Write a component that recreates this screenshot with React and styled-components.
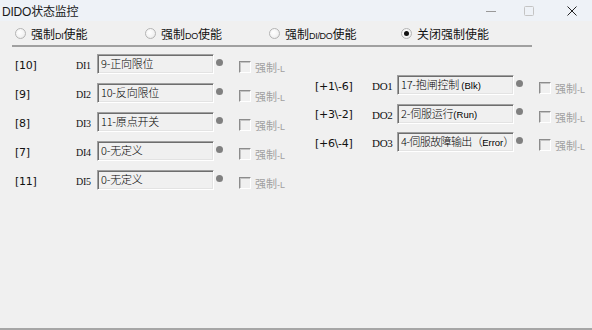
import React from "react";
import styled, { createGlobalStyle } from "styled-components";

const GlobalStyle = createGlobalStyle`
  html, body {
    margin: 0;
    padding: 0;
    background: #f0f0f0;
  }
  body {
    font-family: "Liberation Sans", "Noto Sans CJK SC", sans-serif;
    font-size: 12px;
    color: #000;
  }
`;

const Window = styled.div`
  width: 592px;
  height: 330px;
  box-sizing: border-box;
  display: flex;
  flex-direction: column;
  background: #f0f0f0;
  border-bottom: 2px solid #a6a6a6;
  overflow: hidden;
`;

const TitleBar = styled.div`
  height: 21px;
  flex: none;
  display: flex;
  align-items: center;
  background: #eef2f7;
  padding-left: 2px;
`;

const Title = styled.div`
  flex: 1;
  font-size: 12px;
  color: #1a1a1a;
  letter-spacing: -0.2px;
`;

const Controls = styled.div`
  display: flex;
  align-items: center;
  height: 100%;
`;

const Ctrl = styled.div`
  width: ${(p) => p.$w}px;
  height: 21px;
  display: flex;
  align-items: center;
  justify-content: center;
`;

const RadioRow = styled.div`
  display: flex;
  align-items: center;
  height: 24px;
  padding-left: 15px;
  flex: none;
`;

const RadioItem = styled.label`
  display: flex;
  align-items: center;
  width: ${(p) => (p.$w ? p.$w + "px" : "auto")};
  gap: 5px;
  font-size: 12px;
  font-family: "Noto Sans CJK SC", sans-serif;
  color: #111;
`;

const RadioDot = styled.span`
  width: 11px;
  height: 11px;
  box-sizing: border-box;
  border-radius: 50%;
  border: 1px solid #b4b4b4;
  background: radial-gradient(circle at 40% 40%, #ffffff 0%, #f2f2f2 60%, #dcdcdc 100%);
  display: flex;
  align-items: center;
  justify-content: center;
  &::after {
    content: "";
    width: 5px;
    height: 5px;
    border-radius: 50%;
    background: ${(p) => (p.$on ? "#111" : "transparent")};
  }
`;

const Small = styled.span`
  font-family: "Liberation Sans", sans-serif;
  font-size: 9px;
  letter-spacing: -0.3px;
`;

const Separator = styled.div`
  margin-left: 12px;
  width: 520px;
  height: 0;
  border-top: 2px solid #a0a0a0;
  flex: none;
`;

const Panels = styled.div`
  display: flex;
  padding-left: 15px;
`;

const Column = styled.div`
  width: ${(p) => p.$w}px;
  display: flex;
  flex-direction: column;
  gap: ${(p) => p.$gap}px;
  padding-top: ${(p) => p.$top}px;
`;

const Row = styled.div`
  display: flex;
  align-items: center;
  height: 20px;
`;

const Tag = styled.span`
  width: ${(p) => p.$w}px;
  flex: none;
  font-size: 11px;
  font-family: "DejaVu Sans", "Liberation Sans", sans-serif;
  letter-spacing: -0.3px;
  color: #111;
  padding-top: 2px;
`;

const Name = styled.span`
  width: ${(p) => p.$w}px;
  flex: none;
  font-size: ${(p) => p.$fs || 10}px;
  font-family: "Liberation Serif", "DejaVu Serif", serif;
  letter-spacing: -0.3px;
  color: #111;
  padding-top: 2px;
`;

const Field = styled.div`
  width: ${(p) => p.$w}px;
  height: 20px;
  box-sizing: border-box;
  flex: none;
  border-top: 1px solid #a0a0a0;
  border-left: 1px solid #a0a0a0;
  border-right: 1px solid #ffffff;
  border-bottom: 1px solid #ffffff;
  box-shadow: inset 1px 1px 0 #6e6e6e, inset -1px -1px 0 #e3e3e3;
  background: #f0f0f0;
  padding: 1px 0 0 3px;
  font-family: "Noto Sans CJK SC", sans-serif;
  font-size: 11px;
  font-weight: 300;
  line-height: 14px;
  letter-spacing: ${(p) => (p.$tight ? "-0.6px" : "-0.2px")};
  white-space: nowrap;
  color: #000;
`;

const Latin = styled.span`
  font-family: "Liberation Sans", sans-serif;
  font-size: 9.5px;
  letter-spacing: 0;
`;

const Lamp = styled.span`
  width: 7px;
  height: 7px;
  border-radius: 50%;
  background: #808080;
  flex: none;
  margin: 0 0 4px 2px;
`;

const Force = styled.label`
  display: flex;
  align-items: center;
  gap: 4px;
  margin-left: 16px;
  padding-top: 6px;
  color: #a0a0a0;
  font-family: "Noto Sans CJK SC", sans-serif;
  font-size: 11px;
`;

const Box = styled.span`
  width: 12px;
  height: 12px;
  box-sizing: border-box;
  border-top: 1px solid #8c8c8c;
  border-left: 1px solid #8c8c8c;
  border-right: 1px solid #fff;
  border-bottom: 1px solid #fff;
  box-shadow: inset 1px 1px 0 #c4c4c4;
  background: #f0f0f0;
`;

const SmallL = styled.span`
  font-size: 9px;
  font-family: "Liberation Sans", sans-serif;
`;

const diRows = [
  ["[10]", "DI1", "9-正向限位"],
  ["[9]", "DI2", "10-反向限位"],
  ["[8]", "DI3", "11-原点开关"],
  ["[7]", "DI4", "0-无定义"],
  ["[11]", "DI5", "0-无定义"],
];

const doRows = [
  ["[+1\\-6]", "DO1", <>17-抱闸控制 <Latin>(Blk)</Latin></>],
  ["[+3\\-2]", "DO2", <>2-伺服运行<Latin>(Run)</Latin></>],
  ["[+6\\-4]", "DO3", <>4-伺服故障输出（<Latin>Error</Latin>）</>, true],
];

function ForceBox() {
  return (
    <Force>
      <Box />
      <span>
        强制<SmallL>-L</SmallL>
      </span>
    </Force>
  );
}

export default function App() {
  return (
    <>
      <GlobalStyle />
      <Window>
        <TitleBar>
          <Title>DIDO状态监控</Title>
          <Controls>
            <Ctrl $w={30}>
              <svg width="10" height="10" viewBox="0 0 10 10">
                <line x1="0" y1="5.5" x2="10" y2="5.5" stroke="#999" strokeWidth="1" />
              </svg>
            </Ctrl>
            <Ctrl $w={46}>
              <svg width="10" height="10" viewBox="0 0 10 10">
                <rect x="0.5" y="0.5" width="9" height="9" rx="1" fill="none" stroke="#c4c4c4" />
              </svg>
            </Ctrl>
            <Ctrl $w={40}>
              <svg width="10" height="10" viewBox="0 0 10 10">
                <path d="M0.5 0.5 L9.5 9.5 M9.5 0.5 L0.5 9.5" stroke="#222" strokeWidth="1" />
              </svg>
            </Ctrl>
          </Controls>
        </TitleBar>

        <RadioRow>
          <RadioItem $w={130}>
            <RadioDot />
            <span>强制<Small>DI</Small>使能</span>
          </RadioItem>
          <RadioItem $w={124}>
            <RadioDot />
            <span>强制<Small>DO</Small>使能</span>
          </RadioItem>
          <RadioItem $w={132}>
            <RadioDot />
            <span>强制<Small>DI/DO</Small>使能</span>
          </RadioItem>
          <RadioItem>
            <RadioDot $on />
            <span>关闭强制使能</span>
          </RadioItem>
        </RadioRow>
        <Separator />

        <Panels>
          <Column $w={300} $gap={9} $top={7}>
            {diRows.map(([tag, name, text]) => (
              <Row key={name}>
                <Tag $w={61}>{tag}</Tag>
                <Name $w={21}>{name}</Name>
                <Field $w={117}>{text}</Field>
                <Lamp />
                <ForceBox />
              </Row>
            ))}
          </Column>
          <Column $w={277} $gap={8.5} $top={28}>
            {doRows.map(([tag, name, text, tight]) => (
              <Row key={name}>
                <Tag $w={57}>{tag}</Tag>
                <Name $w={25} $fs={11}>{name}</Name>
                <Field $w={117} $tight={tight}>{text}</Field>
                <Lamp />
                <ForceBox />
              </Row>
            ))}
          </Column>
        </Panels>
      </Window>
    </>
  );
}
